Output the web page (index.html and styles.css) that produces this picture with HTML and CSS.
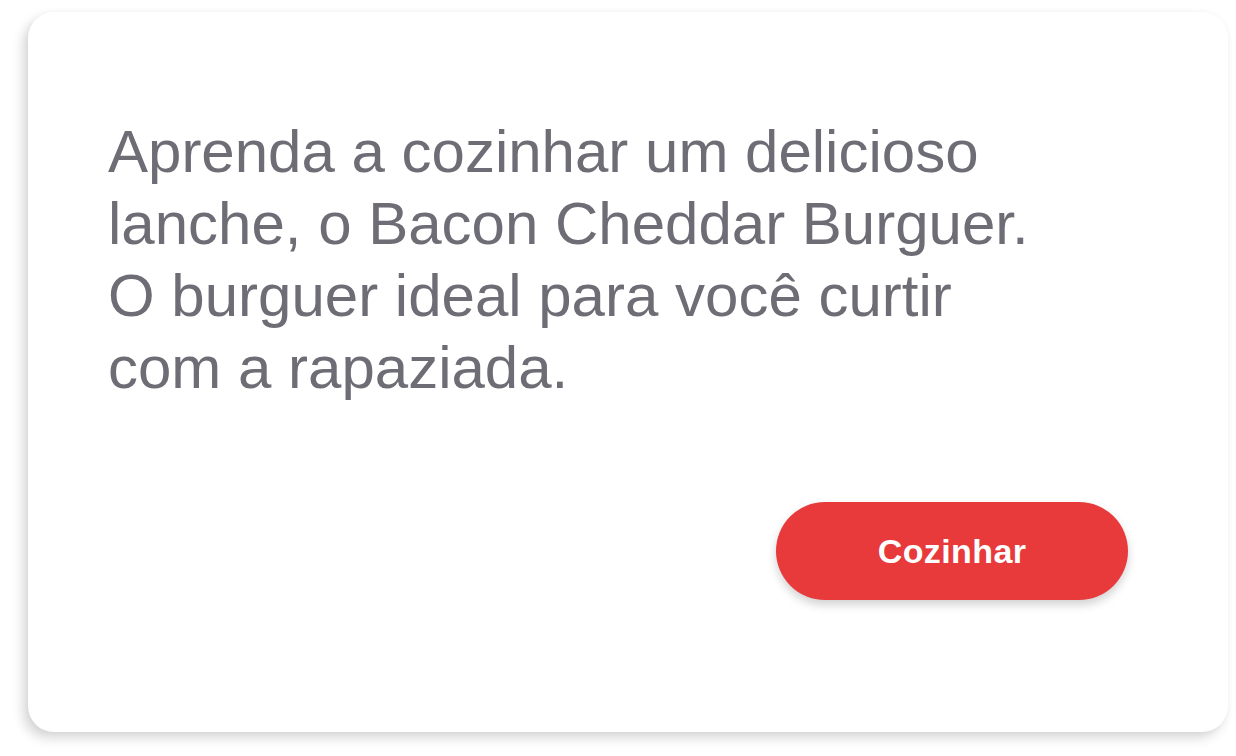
FILE: index.html
```html
<!DOCTYPE html>
<html lang="pt-BR">
<head>
<meta charset="utf-8">
<title>Bacon Cheddar Burguer</title>
<link rel="stylesheet" href="styles.css">
</head>
<body>
  <main class="card">
    <p class="description">Aprenda a cozinhar um delicioso<br>lanche, o Bacon Cheddar Burguer.<br>O burguer ideal para você curtir<br>com a rapaziada.</p>
    <button class="cook-button" type="button">Cozinhar</button>
  </main>
</body>
</html>
```
FILE: styles.css
```css
html, body {
  margin: 0;
  padding: 0;
  background: #ffffff;
}

body {
  box-sizing: border-box;
  min-height: 756px;
  padding: 12px 0 24px 28px;
  font-family: "Liberation Sans", Arial, Helvetica, sans-serif;
}

.card {
  box-sizing: border-box;
  width: 1200px;
  height: 720px;
  background: #ffffff;
  border-radius: 26px;
  box-shadow: -5px 6px 12px rgba(0, 0, 0, 0.16), 0 0 6px rgba(0, 0, 0, 0.03);
  padding: 104px 100px 0 80px;
  display: flex;
  flex-direction: column;
}

.description {
  margin: 0;
  font-size: 60px;
  line-height: 72px;
  color: #6e6d75;
  white-space: nowrap;
}

.cook-button {
  align-self: flex-end;
  margin-top: 98px;
  width: 352px;
  height: 98px;
  border: none;
  border-radius: 49px;
  background: #e8393b;
  color: #ffffff;
  font-family: "Liberation Sans", Arial, Helvetica, sans-serif;
  font-weight: 700;
  font-size: 34px;
  letter-spacing: 0.4px;
  box-shadow: 0 5px 10px rgba(0, 0, 0, 0.18);
  cursor: pointer;
}
```
